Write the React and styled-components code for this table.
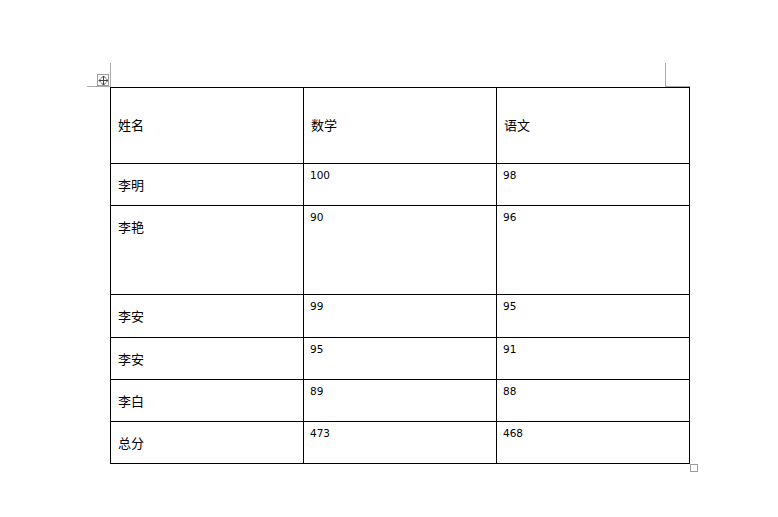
import React from 'react';
import styled, { createGlobalStyle } from 'styled-components';

const GlobalStyle = createGlobalStyle`
  html, body {
    margin: 0;
    padding: 0;
    background: #ffffff;
  }
  body {
    font-family: "Noto Sans CJK SC", "DejaVu Sans", sans-serif;
    color: #000;
  }
`;

const Sheet = styled.div`
  width: 778px;
  height: 517px;
  box-sizing: border-box;
  padding: 63px 0 0 87px;
  background: #fff;
`;

const MarkRow = styled.div`
  width: 603px;
  height: 24px;
  display: flex;
  justify-content: space-between;
`;

const CornerMark = styled.div`
  box-sizing: border-box;
  width: ${p => (p.side === 'left' ? 24 : 25)}px;
  height: 24px;
  border-bottom: 1px solid #ababab;
  ${p => (p.side === 'left' ? 'border-right: 1px solid #ababab;' : 'border-left: 1px solid #ababab;')}
`;

const TableWrap = styled.div`
  position: relative;
  margin-left: 23px;
  width: 580px;
`;

const MoveHandle = styled.div`
  position: absolute;
  left: -13px;
  top: -13px;
  width: 12px;
  height: 12px;
  box-sizing: border-box;
  border: 1px solid #9c9c9c;
  background: #fff;
  display: flex;
  align-items: center;
  justify-content: center;
`;

const ResizeHandle = styled.div`
  position: absolute;
  left: 580px;
  top: 377px;
  width: 8px;
  height: 8px;
  box-sizing: border-box;
  border: 1px solid #9c9c9c;
  background: #fff;
`;

const Grid = styled.table`
  border-collapse: separate;
  border-spacing: 0;
  table-layout: fixed;
  width: 580px;
  border-top: 1px solid #000;
  border-left: 1px solid #000;
`;

const Row = styled.tr`
  height: ${p => p.h}px;
`;

const Cell = styled.td`
  box-sizing: border-box;
  border-right: 1px solid #000;
  border-bottom: 1px solid #000;
  vertical-align: top;
  padding: 0;
  padding-left: ${p => (p.num ? 6 : 7)}px;
  padding-top: ${p => (p.num ? 5 : p.head ? 29 : 13)}px;
  font-family: ${p => (p.num ? '"DejaVu Sans", sans-serif' : '"Noto Sans CJK SC", "Noto Sans CJK TC", sans-serif')};
  font-size: ${p => (p.num ? 10.5 : 13)}px;
  line-height: ${p => (p.num ? 12 : 16)}px;
  white-space: nowrap;
`;

const MoveIcon = () => (
  <svg width="10" height="10" viewBox="0 0 10 10" fill="none" stroke="#444" strokeWidth="1" shapeRendering="crispEdges">
    <line x1="5.5" y1="1" x2="5.5" y2="10" />
    <line x1="1" y1="5.5" x2="10" y2="5.5" />
    <polyline points="3.5,3 5.5,1 7.5,3" shapeRendering="auto" />
    <polyline points="3.5,8 5.5,10 7.5,8" shapeRendering="auto" />
    <polyline points="3,3.5 1,5.5 3,7.5" shapeRendering="auto" />
    <polyline points="8,3.5 10,5.5 8,7.5" shapeRendering="auto" />
  </svg>
);

const rows = [
  { name: '李明', math: '100', chinese: '98', h: 42 },
  { name: '李艳', math: '90', chinese: '96', h: 89 },
  { name: '李安', math: '99', chinese: '95', h: 43 },
  { name: '李安', math: '95', chinese: '91', h: 42 },
  { name: '李白', math: '89', chinese: '88', h: 42 },
  { name: '总分', math: '473', chinese: '468', h: 42 },
];

const App = () => (
  <>
    <GlobalStyle />
    <Sheet>
      <MarkRow>
        <CornerMark side="left" />
        <CornerMark side="right" />
      </MarkRow>
      <TableWrap>
        <MoveHandle>
          <MoveIcon />
        </MoveHandle>
        <Grid>
          <colgroup>
            <col style={{ width: 193 }} />
            <col style={{ width: 193 }} />
            <col style={{ width: 193 }} />
          </colgroup>
          <tbody>
            <Row h={76}>
              <Cell head>姓名</Cell>
              <Cell head>数学</Cell>
              <Cell head>语文</Cell>
            </Row>
            {rows.map((r, i) => (
              <Row key={i} h={r.h}>
                <Cell>{r.name}</Cell>
                <Cell num>{r.math}</Cell>
                <Cell num>{r.chinese}</Cell>
              </Row>
            ))}
          </tbody>
        </Grid>
        <ResizeHandle />
      </TableWrap>
    </Sheet>
  </>
);

export default App;
